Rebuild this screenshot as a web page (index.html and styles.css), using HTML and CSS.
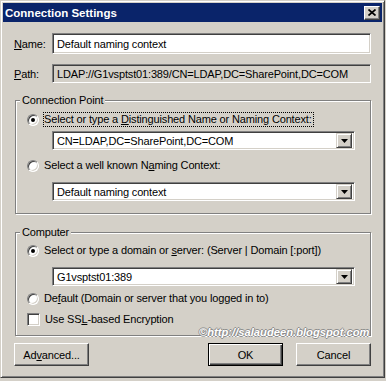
FILE: index.html
```html
<!DOCTYPE html>
<html lang="en">
<head>
    <meta charset="UTF-8">
    <meta name="viewport" content="width=device-width, initial-scale=1.0">
    <title>Connection Settings</title>
    <link rel="stylesheet" href="styles.css">
</head>
<body>
    <div class="window">
        <div class="titlebar">
            <span class="title">Connection Settings</span>
            <span class="close-btn">
                <svg width="8" height="7" viewBox="0 0 8 7"><path d="M0.5 0.5 L7.5 6.5 M7.5 0.5 L0.5 6.5" stroke="#000" stroke-width="1.7" fill="none"/></svg>
            </span>
        </div>
        <div class="dialog">
            <div class="field-row">
                <label class="field-label"><u>N</u>ame:</label>
                <div class="textbox">Default naming context</div>
            </div>
            <div class="field-row path-row">
                <label class="field-label"><u>P</u>ath:</label>
                <div class="textbox readonly">LDAP://G1vsptst01:389/CN=LDAP,DC=SharePoint,DC=COM</div>
            </div>

            <fieldset class="group group-conn">
                <legend>Connection Point</legend>
                <div class="group-body">
                    <div class="option first">
                        <span class="radio checked"></span>
                        <span class="option-text focused">Select or type a <u>D</u>istinguished Name or Naming Context:</span>
                    </div>
                    <div class="combo combo-first">
                        <span class="combo-text">CN=LDAP,DC=SharePoint,DC=COM</span>
                        <span class="combo-btn"><svg width="7" height="4" viewBox="0 0 7 4"><path d="M0 0 H7 L3.5 4 Z" fill="#000"/></svg></span>
                    </div>
                    <div class="option second">
                        <span class="radio"></span>
                        <span class="option-text">Select a well known N<u>a</u>ming Context:</span>
                    </div>
                    <div class="combo combo-second">
                        <span class="combo-text">Default naming context</span>
                        <span class="combo-btn"><svg width="7" height="4" viewBox="0 0 7 4"><path d="M0 0 H7 L3.5 4 Z" fill="#000"/></svg></span>
                    </div>
                </div>
            </fieldset>

            <fieldset class="group group-computer">
                <legend>Computer</legend>
                <div class="group-body">
                    <div class="option first">
                        <span class="radio checked"></span>
                        <span class="option-text">Select or type a domain or <u>s</u>erver: (Server | Domain [:port])</span>
                    </div>
                    <div class="combo combo-first">
                        <span class="combo-text">G1vsptst01:389</span>
                        <span class="combo-btn"><svg width="7" height="4" viewBox="0 0 7 4"><path d="M0 0 H7 L3.5 4 Z" fill="#000"/></svg></span>
                    </div>
                    <div class="option default-opt">
                        <span class="radio"></span>
                        <span class="option-text">De<u>f</u>ault (Domain or server that you logged in to)</span>
                    </div>
                    <div class="option ssl-opt">
                        <span class="checkbox"></span>
                        <span class="option-text">Use SS<u>L</u>-based Encryption</span>
                    </div>
                </div>
            </fieldset>

            <div class="buttons">
                <button class="btn">Ad<u>v</u>anced...</button>
                <span class="spacer"></span>
                <button class="btn default">OK</button>
                <button class="btn">Cancel</button>
            </div>
        </div>
        <div class="watermark">©http://salaudeen.blogspot.com</div>
    </div>
</body>
</html>
```

FILE: styles.css
```css
body {
    margin: 0;
    background-color: #d4d0c8;
    font-family: "Liberation Sans", Arial, sans-serif;
    font-size: 11px;
    letter-spacing: -0.15px;
    color: #000;
}
u {
    text-decoration: underline;
    text-underline-offset: 1px;
}
.window {
    position: relative;
    width: 385px;
    height: 378px;
    box-sizing: border-box;
    padding: 2px;
    background-color: #d4d0c8;
    border: 1px solid;
    border-color: #d4d0c8 #404040 #404040 #d4d0c8;
    box-shadow: inset 1px 1px #fff, inset -1px -1px #808080;
}
.titlebar {
    height: 19px;
    background-color: #0a246a;
    display: flex;
    align-items: center;
    justify-content: space-between;
    padding: 0 2px 0 2px;
}
.title {
    color: #fff;
    font-weight: bold;
    font-size: 11.5px;
    letter-spacing: 0;
}
.close-btn {
    width: 16px;
    height: 14px;
    box-sizing: border-box;
    background-color: #d4d0c8;
    border: 1px solid;
    border-color: #fff #404040 #404040 #fff;
    box-shadow: inset -1px -1px #808080;
    display: flex;
    justify-content: center;
    align-items: center;
}
.close-btn svg {
    display: block;
    margin-left: -1px;
}
.dialog {
    padding: 11px 11px 0 11px;
}
.field-row {
    display: flex;
    align-items: center;
}
.path-row {
    margin-top: 10px;
}
.field-label {
    width: 38px;
    flex: none;
}
.textbox {
    flex: 1;
    height: 21px;
    box-sizing: border-box;
    border: 1px solid;
    border-color: #808080 #fff #fff #808080;
    box-shadow: inset 1px 1px #404040, inset -1px -1px #d4d0c8;
    background-color: #fff;
    padding: 0 4px;
    display: flex;
    align-items: center;
    white-space: nowrap;
}
.textbox.readonly {
    height: 19px;
    background-color: #d4d0c8;
}
.group {
    margin: 10px 0 0 1px;
    padding: 0;
    min-width: 0;
    border: 1px solid #808080;
    box-shadow: 1px 1px #fff, inset 1px 1px #fff;
}
.group legend {
    margin-left: 4px;
    padding: 0 2px;
    line-height: 15px;
    height: 15px;
    background-color: #d4d0c8;
}
.group-computer {
    margin-top: 11px;
}
.group-body {
    padding: 4px 0 12px 11px;
}
.group-computer .group-body {
    padding-top: 3px;
    padding-bottom: 8px;
}
.option {
    display: flex;
    align-items: center;
    height: 15px;
}
.option.second {
    margin-top: 8px;
}
.option.default-opt {
    margin-top: 5px;
}
.option.ssl-opt {
    margin-top: 6px;
}
.option-text {
    margin-left: 4px;
    border: 1px dotted transparent;
    padding: 0 1px 0 0;
    line-height: 13px;
    white-space: nowrap;
}
.option-text.focused {
    border-color: #000;
}
.radio {
    width: 12px;
    height: 12px;
    flex: none;
    box-sizing: border-box;
    border-radius: 50%;
    border: 1px solid;
    border-color: #808080 #fff #fff #808080;
    box-shadow: inset 1px 1px #404040, inset -1px -1px #d4d0c8;
    background-color: #fff;
    display: flex;
    justify-content: center;
    align-items: center;
}
.radio.checked::after {
    content: "";
    width: 4px;
    height: 4px;
    border-radius: 50%;
    background-color: #000;
}
.checkbox {
    width: 13px;
    height: 13px;
    flex: none;
    box-sizing: border-box;
    border: 1px solid;
    border-color: #808080 #fff #fff #808080;
    box-shadow: inset 1px 1px #404040, inset -1px -1px #d4d0c8;
    background-color: #fff;
}
.combo {
    width: 303px;
    height: 19px;
    box-sizing: border-box;
    margin-left: 25px;
    padding: 2px;
    border: 1px solid;
    border-color: #808080 #fff #fff #808080;
    box-shadow: inset 1px 1px #404040, inset -1px -1px #d4d0c8;
    background-color: #fff;
    display: flex;
    align-items: center;
}
.combo-first {
    margin-top: 4px;
}
.combo-second {
    margin-top: 9px;
}
.group-computer .combo-first {
    margin-top: 9px;
}
.combo-text {
    flex: 1;
    padding-left: 2px;
    white-space: nowrap;
}
.combo-btn {
    width: 16px;
    height: 15px;
    box-sizing: border-box;
    background-color: #d4d0c8;
    border: 1px solid;
    border-color: #d4d0c8 #404040 #404040 #d4d0c8;
    box-shadow: inset 1px 1px #fff, inset -1px -1px #808080;
    display: flex;
    justify-content: center;
    align-items: center;
}
.combo-btn svg {
    display: block;
}
.buttons {
    display: flex;
    gap: 13px;
    margin-top: 7px;
}
.spacer {
    flex: 1;
}
.btn {
    width: 75px;
    height: 23px;
    box-sizing: border-box;
    font-family: "Liberation Sans", Arial, sans-serif;
    font-size: 11px;
    letter-spacing: -0.15px;
    color: #000;
    background-color: #d4d0c8;
    border: 1px solid;
    border-color: #fff #404040 #404040 #fff;
    box-shadow: inset -1px -1px #808080;
    padding: 0;
}
.btn.default {
    border: 1px solid #000;
    box-shadow: inset 1px 1px #fff, inset -1px -1px #404040, inset -2px -2px #808080;
}
.watermark {
    position: absolute;
    left: 198px;
    top: 325px;
    font-size: 11.2px;
    font-weight: bold;
    font-style: italic;
    letter-spacing: 0;
    color: #fff;
    text-shadow: 1px 0 #8c8c8c, -1px 0 #8c8c8c, 0 1px #8c8c8c, 0 -1px #8c8c8c;
    white-space: nowrap;
}
```
